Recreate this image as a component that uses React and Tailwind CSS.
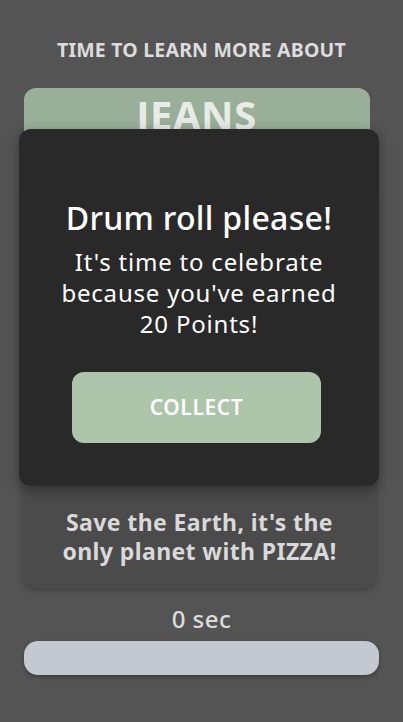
import React from "react";

function App() {
  return (
    <div
      className="relative w-[403px] h-[722px] overflow-hidden bg-[#545454]"
      style={{ fontFamily: '"Noto Sans", "Open Sans", sans-serif' }}
    >
      <div className="flex flex-col items-center pt-[37px]">
        <h3 className="text-[19.5px] font-bold leading-[26px] text-[#dcdcdc] tracking-[0.2px]">
          TIME TO LEARN MORE ABOUT
        </h3>
        <div className="mt-[25px] w-[346px] ml-[-10px] h-[120px] rounded-[12px] bg-[#9aaf9a] flex justify-center">
          <span className="mt-[2px] text-[40px] font-bold leading-[50px] tracking-[0.5px] text-[#e8ece6]">JEANS</span>
        </div>
        <div className="mt-[-20px] w-[353px] ml-[-4px] h-[400px] rounded-[12px] bg-[#4b4b4b] shadow-[0_2px_6px_rgba(0,0,0,0.25)] flex flex-col justify-end items-center pb-[22px]">
          <p className="text-[23px] font-bold leading-[29px] tracking-[0.4px] text-center text-[#d9d9d9]">
            Save the Earth, it's the
            <br />
            only planet with PIZZA!
          </p>
        </div>
        <div className="mt-[16px] text-[24px] leading-[30px] font-medium tracking-[0.5px] text-[#dcdcdc]">0 sec</div>
        <div className="mt-[7px] w-[355px] h-[34px] rounded-[14px] bg-[#c4c8d0] shadow-[0_2px_4px_rgba(0,0,0,0.3)]" />
      </div>

      <div className="absolute left-[19px] top-[129px] w-[360px] h-[357px] rounded-[12px] bg-[#292929] shadow-[0_4px_14px_rgba(0,0,0,0.35)] flex flex-col items-center">
        <h2 className="mt-[68px] text-[32px] font-medium leading-[42px] tracking-[0.3px] text-white">Drum roll please!</h2>
        <p className="mt-[7px] text-[24px] leading-[31px] tracking-[0.8px] text-center text-white">
          It's time to celebrate
          <br />
          because you've earned
          <br />
          20 Points!
        </p>
        <button className="mt-[33px] ml-[-5px] w-[249px] h-[71px] rounded-[12px] bg-[#adc5ab] text-white text-[21px] font-semibold tracking-[0.6px]">
          COLLECT
        </button>
      </div>
    </div>
  );
}

export default App;
